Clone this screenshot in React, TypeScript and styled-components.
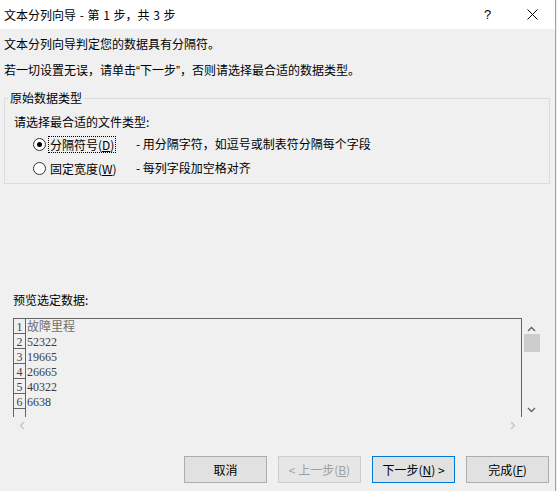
import React from "react"
import styled, { createGlobalStyle } from "styled-components"

const PREVIEW_ROWS = ["故障里程", "52322", "19665", "26665", "40322", "6638"]

const GlobalStyle = createGlobalStyle`
  html, body {
    margin: 0;
    padding: 0;
  }
  body {
    background: #f0f0f0;
    color: #000;
    font-family: "Noto Sans CJK SC", "Liberation Sans", sans-serif;
    font-size: 12px;
  }
`

const Chevron = ({ dir, color }: { dir: "up" | "down" | "left" | "right"; color: string }) => {
  const vertical = dir === "up" || dir === "down"
  const points = {
    up: "1,5 4.5,1.5 8,5",
    down: "1,1 4.5,4.5 8,1",
    left: "5,1 1.5,4.5 5,8",
    right: "1,1 4.5,4.5 1,8",
  }[dir]
  return (
    <svg width={vertical ? 9 : 6} height={vertical ? 6 : 9} viewBox={vertical ? "0 0 9 6" : "0 0 6 9"}>
      <polyline points={points} fill="none" stroke={color} strokeWidth="1.3" />
    </svg>
  )
}

export default function App() {
  return (
    <>
      <GlobalStyle />
      <Dialog>
        <TitleBar>
          <TitleText>文本分列向导 - 第 1 步，共 3 步</TitleText>
          <TitleButton>?</TitleButton>
          <TitleButton>
            <svg width="11" height="11" viewBox="0 0 11 11">
              <path d="M0.5 0.5 L10.5 10.5 M10.5 0.5 L0.5 10.5" stroke="#000" strokeWidth="1" />
            </svg>
          </TitleButton>
        </TitleBar>
        <Body>
          <Message>文本分列向导判定您的数据具有分隔符。</Message>
          <Message $gap={10}>
            若一切设置无误，请单击<Quote>“</Quote>下一步<Quote>”</Quote>，否则请选择最合适的数据类型。
          </Message>

          <GroupBox>
            <Legend>原始数据类型</Legend>
            <Prompt>请选择最合适的文件类型:</Prompt>
            <RadioRow>
              <Radio $checked />
              <RadioLabelCell>
                <RadioLabel $focused>
                  分隔符号(<u>D</u>)
                </RadioLabel>
              </RadioLabelCell>
              <RadioHint>- 用分隔字符，如逗号或制表符分隔每个字段</RadioHint>
            </RadioRow>
            <RadioRow>
              <Radio />
              <RadioLabelCell>
                <RadioLabel>
                  固定宽度(<u>W</u>)
                </RadioLabel>
              </RadioLabelCell>
              <RadioHint>- 每列字段加空格对齐</RadioHint>
            </RadioRow>
          </GroupBox>

          <PreviewTitle>预览选定数据:</PreviewTitle>
          <Preview>
            <DataPane>
              <NumColumn>
                {PREVIEW_ROWS.map((_, i) => (
                  <NumCell key={i}>{i + 1}</NumCell>
                ))}
              </NumColumn>
              <TextColumn>
                {PREVIEW_ROWS.map((row, i) => (
                  <TextCell key={i} $header={i === 0}>
                    {row}
                  </TextCell>
                ))}
              </TextColumn>
            </DataPane>
            <VScroll>
              <Chevron dir="up" color="#606060" />
              <Thumb />
              <VSpacer />
              <Chevron dir="down" color="#606060" />
            </VScroll>
            <HScroll>
              <Chevron dir="left" color="#c4c4c4" />
              <Chevron dir="right" color="#c4c4c4" />
            </HScroll>
          </Preview>

          <ButtonRow>
            <Button>取消</Button>
            <Button $disabled>
              &lt; 上一步(<u>B</u>)
            </Button>
            <Button $primary>
              下一步(<u>N</u>) &gt;
            </Button>
            <Button>
              完成(<u>F</u>)
            </Button>
          </ButtonRow>
        </Body>
      </Dialog>
    </>
  )
}

const Dialog = styled.div`
  width: 555px;
  height: 491px;
  border-right: 1px solid #a0a0a0;
  display: flex;
  flex-direction: column;
  background: #f0f0f0;
  overflow: hidden;
`

const TitleBar = styled.div`
  height: 29px;
  flex-shrink: 0;
  display: flex;
  align-items: center;
  padding-left: 4px;
  background: #fff;
`

const TitleText = styled.div`
  flex: 1;
  line-height: 16px;
  word-spacing: 1px;
`

const TitleButton = styled.div`
  width: 45px;
  height: 29px;
  display: flex;
  align-items: center;
  justify-content: center;
  font-family: "Liberation Sans", sans-serif;
  font-size: 13px;
`

const Body = styled.div`
  display: flex;
  flex-direction: column;
  padding: 0 5px 0 4px;
`

const Message = styled.div<{ $gap?: number }>`
  margin-top: ${(p) => p.$gap ?? 7}px;
  line-height: 16px;
`

const Quote = styled.span`
  font-family: "Liberation Sans", sans-serif;
`

const GroupBox = styled.fieldset`
  margin: 11px 0 0;
  padding: 0 3px 5px;
  border: 1px solid #dcdcdc;
  min-width: 0;
`

const Legend = styled.legend`
  padding: 0 2px;
  line-height: 16px;
`

const Prompt = styled.div`
  margin: 8px 0 0 6px;
  line-height: 16px;
`

const RadioRow = styled.div`
  display: flex;
  align-items: center;
  height: 20px;
  margin: 4px 0 0 25px;
`

const Radio = styled.span<{ $checked?: boolean }>`
  position: relative;
  width: 11px;
  height: 11px;
  flex-shrink: 0;
  border: 1px solid #333;
  border-radius: 50%;
  background: #fff;
  margin-right: 2px;

  &::after {
    content: "";
    display: ${(p) => (p.$checked ? "block" : "none")};
    position: absolute;
    left: 3px;
    top: 3px;
    width: 5px;
    height: 5px;
    border-radius: 50%;
    background: #000;
  }
`

const RadioLabelCell = styled.div`
  width: 88px;
  flex-shrink: 0;
`

const RadioLabel = styled.span<{ $focused?: boolean }>`
  display: inline-block;
  padding: 0 1px;
  line-height: 15px;
  border: 1px dotted ${(p) => (p.$focused ? "#000" : "transparent")};
`

const RadioHint = styled.div`
  line-height: 16px;
`

const PreviewTitle = styled.div`
  margin: 108px 0 0 9px;
  line-height: 16px;
`

const Preview = styled.div`
  margin: 10px 0 0 9px;
  display: grid;
  grid-template-columns: 509px 19px;
  grid-template-rows: 99px 17px;
  width: 528px;
`

const DataPane = styled.div`
  display: flex;
  border-top: 1px solid #646464;
  border-right: 1px solid #646464;
  overflow: hidden;
  font-family: "Liberation Serif", "Noto Sans CJK SC", serif;
  font-size: 12px;
`

const NumColumn = styled.div`
  width: 11px;
  flex-shrink: 0;
  border-left: 1px solid #646464;
  border-right: 1px solid #646464;
  color: #444;
`

const NumCell = styled.div`
  box-sizing: border-box;
  height: 15px;
  line-height: 16px;
  text-align: center;
  border-bottom: 1px solid #646464;
`

const TextColumn = styled.div`
  flex: 1;
  padding-left: 1px;
`

const TextCell = styled.div<{ $header?: boolean }>`
  height: 15px;
  line-height: 17px;
  color: ${(p) => (p.$header ? "#6e6e6e" : "#3c3c3c")};
  white-space: nowrap;
`

const VScroll = styled.div`
  display: flex;
  flex-direction: column;
  align-items: center;
  padding-top: 8px;
  padding-bottom: 4px;
`

const Thumb = styled.div`
  margin: 2px 0 0 1px;
  width: 16px;
  height: 18px;
  background: #cdcdcd;
`

const VSpacer = styled.div`
  flex: 1;
`

const HScroll = styled.div`
  display: flex;
  align-items: center;
  justify-content: space-between;
  padding: 0 6px;
`

const ButtonRow = styled.div`
  margin-top: 22px;
  display: flex;
  justify-content: flex-end;
  gap: 11px;
  padding-right: 1px;
`

const Button = styled.div<{ $primary?: boolean; $disabled?: boolean }>`
  box-sizing: border-box;
  width: 83px;
  height: 27px;
  display: flex;
  align-items: center;
  justify-content: center;
  line-height: 16px;
  background: ${(p) => (p.$disabled ? "#e6e6e6" : "#e1e1e1")};
  border: 1px solid ${(p) => (p.$primary ? "#0078d7" : p.$disabled ? "#cccccc" : "#adadad")};
  color: ${(p) => (p.$disabled ? "#a0a0a0" : "#000")};
`
